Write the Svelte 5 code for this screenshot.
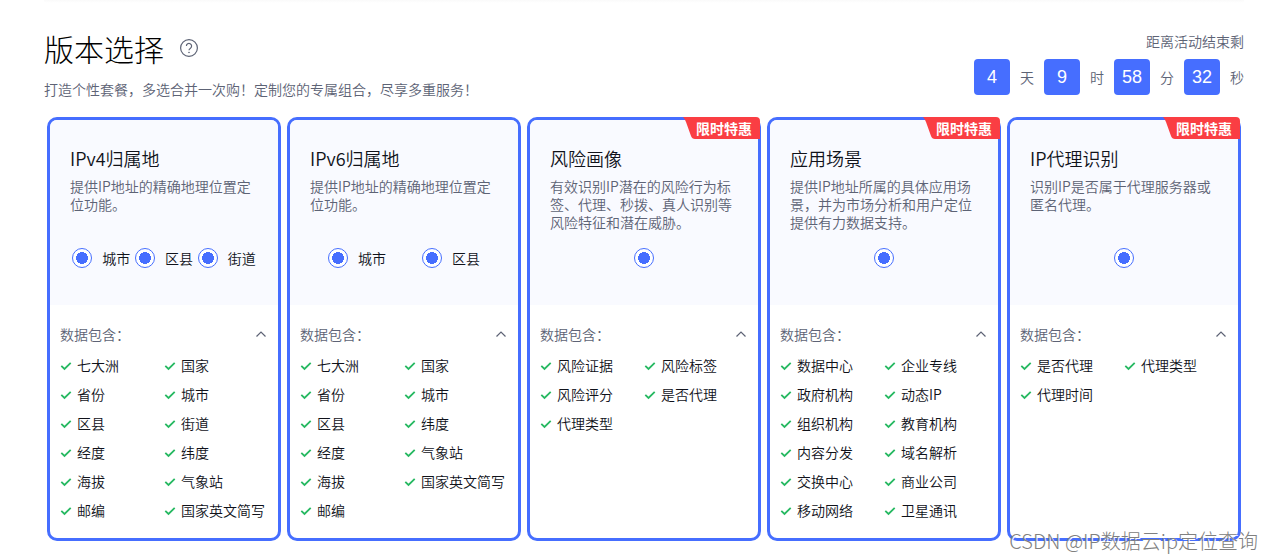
<script lang="ts">
	interface Option {
		label: string;
		checked: boolean;
	}

	interface Plan {
		id: string;
		title: string;
		desc: string;
		sale: boolean;
		open: boolean;
		options: Option[];
		fields: string[];
	}

	const countdown = [
		{ value: 4, unit: '天' },
		{ value: 9, unit: '时' },
		{ value: 58, unit: '分' },
		{ value: 32, unit: '秒' }
	];

	let plans: Plan[] = $state([
		{
			id: 'ipv4',
			title: 'IPv4归属地',
			desc: '提供IP地址的精确地理位置定位功能。',
			sale: false,
			open: true,
			options: [
				{ label: '城市', checked: true },
				{ label: '区县', checked: true },
				{ label: '街道', checked: true }
			],
			fields: ['七大洲', '国家', '省份', '城市', '区县', '街道', '经度', '纬度', '海拔', '气象站', '邮编', '国家英文简写']
		},
		{
			id: 'ipv6',
			title: 'IPv6归属地',
			desc: '提供IP地址的精确地理位置定位功能。',
			sale: false,
			open: true,
			options: [
				{ label: '城市', checked: true },
				{ label: '区县', checked: true }
			],
			fields: ['七大洲', '国家', '省份', '城市', '区县', '纬度', '经度', '气象站', '海拔', '国家英文简写', '邮编']
		},
		{
			id: 'risk',
			title: '风险画像',
			desc: '有效识别IP潜在的风险行为标签、代理、秒拨、真人识别等风险特征和潜在威胁。',
			sale: true,
			open: true,
			options: [{ label: '', checked: true }],
			fields: ['风险证据', '风险标签', '风险评分', '是否代理', '代理类型']
		},
		{
			id: 'scene',
			title: '应用场景',
			desc: '提供IP地址所属的具体应用场景，并为市场分析和用户定位提供有力数据支持。',
			sale: true,
			open: true,
			options: [{ label: '', checked: true }],
			fields: ['数据中心', '企业专线', '政府机构', '动态IP', '组织机构', '教育机构', '内容分发', '域名解析', '交换中心', '商业公司', '移动网络', '卫星通讯']
		},
		{
			id: 'proxy',
			title: 'IP代理识别',
			desc: '识别IP是否属于代理服务器或匿名代理。',
			sale: true,
			open: true,
			options: [{ label: '', checked: true }],
			fields: ['是否代理', '代理类型', '代理时间']
		}
	]);
</script>

<main class="page">
	<div class="prev-section"></div>

	<header class="header">
		<div>
			<div class="heading">
				<h1>版本选择</h1>
				<button type="button" class="help" aria-label="帮助">
					<svg viewBox="0 0 20 20" width="20" height="20" fill="none" stroke="#5d6375" stroke-width="1.2">
						<circle cx="10" cy="10" r="8.4" />
						<path d="M7.4 8a2.6 2.6 0 1 1 4.2 2.1c-1 .7-1.6 1.1-1.6 2.2" />
						<circle cx="10" cy="14.4" r="0.5" fill="#5d6375" stroke-width="0.6" />
					</svg>
				</button>
			</div>
			<p class="subtitle">打造个性套餐，多选合并一次购！定制您的专属组合，尽享多重服务！</p>
		</div>

		<div class="countdown">
			<span>距离活动结束剩</span>
			<div class="clock">
				{#each countdown as part}
					<span class="digits">{part.value}</span>
					<span>{part.unit}</span>
				{/each}
			</div>
		</div>
	</header>

	<div class="plans">
		{#each plans as plan (plan.id)}
			<section class="card">
				{#if plan.sale}
					<span class="badge">
						<svg viewBox="0 0 77 22" preserveAspectRatio="none" aria-hidden="true">
							<path d="M0 0H73Q77 0 77 4V22H12Q9 22 8 19L3 5Q2 2 0 0Z" fill="#fa3e43" />
						</svg>
						<b>限时特惠</b>
					</span>
				{/if}

				<div class="card-head">
					<h2>{plan.title}</h2>
					<p class="desc">{plan.desc}</p>
					<div class="options">
						{#each plan.options as option}
							<label class="option">
								<input type="checkbox" bind:checked={option.checked} aria-label={option.label || plan.title} />
								{#if option.label}<span>{option.label}</span>{/if}
							</label>
						{/each}
					</div>
				</div>

				<div class="card-body">
					<button type="button" class="toggle" aria-expanded={plan.open} onclick={() => (plan.open = !plan.open)}>
						<span>数据包含：</span>
						<svg class:closed={!plan.open} viewBox="0 0 14 14" width="14" height="14" fill="none" stroke="#5d6375" stroke-width="1.2">
							<path d="M2.5 9.5L7 5l4.5 4.5" />
						</svg>
					</button>
					{#if plan.open}
						<ul class="fields">
							{#each plan.fields as field}
								<li>
									<svg viewBox="0 0 12 12" width="12" height="12" fill="none" stroke="#27b962" stroke-width="1.8">
										<path d="M1.3 5.8l3.2 3.1 6.2-6" />
									</svg>
									<span>{field}</span>
								</li>
							{/each}
						</ul>
					{/if}
				</div>
			</section>
		{/each}
	</div>

	<span class="watermark">CSDN @IP数据云ip定位查询</span>
</main>

<style>
	:global(body) {
		margin: 0;
		background: #fff;
	}

	.page {
		position: relative;
		box-sizing: border-box;
		padding: 0 28px 19px 44px;
		overflow: hidden;
		font-family: 'Noto Sans CJK SC', sans-serif;
		font-size: 14px;
		font-weight: 350;
		line-height: 18px;
		color: #10121a;
	}

	h1,
	h2,
	p,
	ul {
		margin: 0;
		padding: 0;
		font-weight: inherit;
	}

	button {
		padding: 0;
		border: none;
		background: none;
		font: inherit;
		color: inherit;
		cursor: pointer;
	}

	svg {
		display: block;
		flex: none;
	}

	.prev-section {
		height: 3px;
		border-radius: 0 0 12px 12px;
		background: linear-gradient(#fafafa, #fff);
	}

	.header {
		display: flex;
		justify-content: space-between;
		padding-top: 25px;
		height: 89px;
		color: #5d6375;
	}

	.heading {
		display: flex;
		align-items: center;
		gap: 15px;
	}

	h1 {
		font-size: 30px;
		font-weight: 300;
		line-height: 40px;
		color: #000;
	}

	.subtitle {
		margin-top: 12px;
	}

	.countdown {
		display: flex;
		flex-direction: column;
		align-items: flex-end;
		gap: 9px;
		padding-top: 4px;
	}

	.clock {
		display: flex;
		align-items: center;
		gap: 10px;
	}

	.digits {
		width: 36px;
		border-radius: 4px;
		background: #466eff;
		color: #fff;
		font-family: 'Liberation Sans', sans-serif;
		font-size: 18px;
		line-height: 36px;
		text-align: center;
	}

	.plans {
		display: grid;
		grid-template-columns: repeat(5, 1fr);
		gap: 6px;
		padding: 0 3px;
	}

	.card {
		position: relative;
		border: 3px solid #466eff;
		border-radius: 10px;
	}

	.badge {
		position: absolute;
		top: -3px;
		right: -2px;
		box-sizing: border-box;
		width: 77px;
		height: 22px;
		padding-right: 8px;
		color: #fff;
		line-height: 22px;
		text-align: right;
	}

	.badge svg {
		position: absolute;
		inset: 0;
		width: 100%;
		height: 100%;
	}

	.badge b {
		position: relative;
		font-weight: 700;
	}

	.card-head {
		padding: 26px 20px 37px;
		border-radius: 7px 7px 0 0;
		background: #f9faff;
	}

	h2 {
		font-size: 18px;
		line-height: 24px;
	}

	.desc {
		min-height: 54px;
		margin-top: 7px;
		color: #5d6375;
	}

	.options {
		display: flex;
		justify-content: space-around;
		margin-top: 17px;
	}

	.option {
		display: flex;
		align-items: center;
		gap: 10px;
		cursor: pointer;
	}

	.option input {
		appearance: none;
		width: 20px;
		height: 20px;
		margin: 0;
		border: 1px solid #466eff;
		border-radius: 50%;
		background: #fff;
	}

	.option input:checked {
		background: radial-gradient(circle, #466eff 6px, #fff 6px);
	}

	.card-body {
		padding: 18px 10px 13px;
	}

	.toggle {
		display: flex;
		align-items: center;
		justify-content: space-between;
		width: 100%;
		line-height: 22px;
		color: #5d6375;
	}

	.closed {
		transform: rotate(180deg);
	}

	.fields {
		display: grid;
		grid-template-columns: repeat(2, 1fr);
		margin-top: 6px;
		list-style: none;
	}

	.fields li {
		display: flex;
		align-items: center;
		gap: 5px;
		line-height: 29px;
		white-space: nowrap;
	}

	.watermark {
		position: absolute;
		right: 14px;
		bottom: 6px;
		font-size: 20px;
		font-weight: 300;
		line-height: 26px;
		color: #808080;
		text-shadow: 1px 1px 0 #fff;
		pointer-events: none;
	}
</style>
